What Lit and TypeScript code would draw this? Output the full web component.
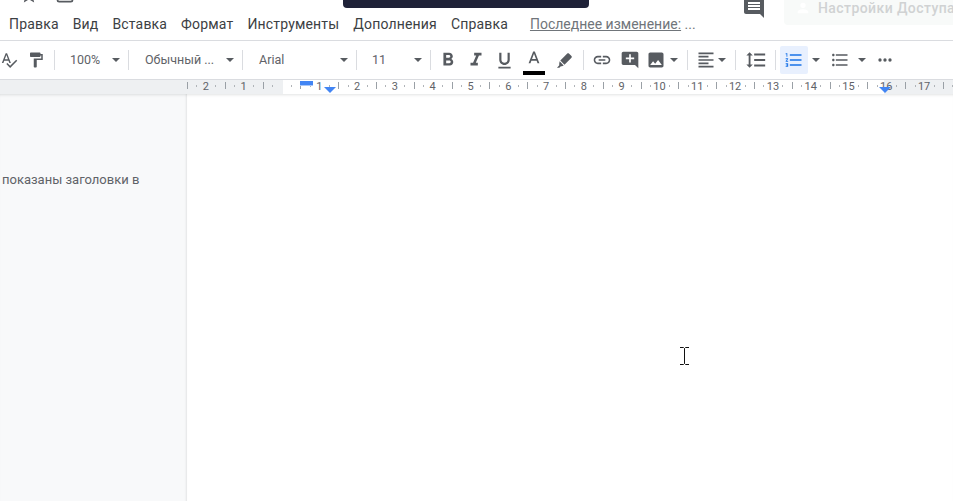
import { LitElement, html, svg, css } from "lit";
import { customElement } from "lit/decorators.js";

const ICONS: Record<string, string> = {
  spell: "M12.45 16h2.09L9.43 3H7.57L2.46 16h2.09l1.12-3h5.64l1.14 3zm-6.02-5L8.5 5.48 10.57 11H6.43zm15.16.59l-8.09 8.09L9.83 16l-1.41 1.41 5.09 5.09L23 13l-1.41-1.41z",
  paint: "M18 4V3c0-.55-.45-1-1-1H5c-.55 0-1 .45-1 1v4c0 .55.45 1 1 1h12c.55 0 1-.45 1-1V6h1v4H9v11c0 .55.45 1 1 1h2c.55 0 1-.45 1-1v-9h8V4h-3z",
  bold: "M15.6 10.79c.97-.67 1.65-1.77 1.65-2.79 0-2.26-1.75-4-4-4H7v14h7.04c2.09 0 3.71-1.7 3.71-3.79 0-1.52-.86-2.82-2.15-3.42zM10 6.5h3c.83 0 1.5.67 1.5 1.5s-.67 1.5-1.5 1.5h-3v-3zm3.5 9H10v-3h3.5c.83 0 1.5.67 1.5 1.5s-.67 1.5-1.5 1.5z",
  italic: "M10 4v3h2.21l-3.42 8H6v3h8v-3h-2.21l3.42-8H18V4z",
  underline: "M12 17c3.31 0 6-2.69 6-6V3h-2.5v8c0 1.93-1.57 3.5-3.5 3.5S8.5 12.93 8.5 11V3H6v8c0 3.31 2.69 6 6 6zm-7 2v2h14v-2H5z",
  color: "M11 3L5.5 17h2.25l1.12-3h6.25l1.12 3h2.25L13 3h-2zm-1.38 9L12 5.67 14.38 12H9.62z",
  marker: "M15.5 3.2c.6-.6 1.5-.6 2.1 0l3.2 3.2c.6.6.6 1.5 0 2.1L12 17.3 6.7 12l8.8-8.8zM5.8 13l5.2 5.2-2.2 1.2-1.4-.1-1.9 1.7H2.5l2.9-3.1-.1-1.5L5.8 13z",
  link: "M3.9 12c0-1.71 1.39-3.1 3.1-3.1h4V7H7c-2.76 0-5 2.24-5 5s2.24 5 5 5h4v-1.9H7c-1.71 0-3.1-1.39-3.1-3.1zM8 13h8v-2H8v2zm9-6h-4v1.9h4c1.71 0 3.1 1.39 3.1 3.1s-1.39 3.1-3.1 3.1h-4V17h4c2.76 0 5-2.24 5-5s-2.24-5-5-5z",
  addComment: "M21.99 4c0-1.1-.89-2-1.99-2H4c-1.1 0-2 .9-2 2v12c0 1.1.9 2 2 2h14l4 4-.01-18zM17 11h-4v4h-2v-4H7V9h4V5h2v4h4v2z",
  image: "M21 19V5c0-1.1-.9-2-2-2H5c-1.1 0-2 .9-2 2v14c0 1.1.9 2 2 2h14c1.1 0 2-.9 2-2zM8.5 13.5l2.5 3.01L14.5 12l4.5 6H5l3.5-4.5z",
  align: "M15 15H3v2h12v-2zm0-8H3v2h12V7zM3 13h18v-2H3v2zm0 8h18v-2H3v2zM3 3v2h18V3H3z",
  spacing: "M6 7h2.5L5 3.5 1.5 7H4v10H1.5L5 20.5 8.5 17H6V7zm4-2v2h12V5H10zm0 14h12v-2H10v2zm0-6h12v-2H10v2z",
  numbered: "M2 17h2v.5H3v1h1v.5H2v1h3v-4H2v1zm1-9h1V4H2v1h1v3zm-1 3h1.8L2 13.1v.9h3v-1H3.2L5 10.9V10H2v1zm5-6v2h14V5H7zm0 14h14v-2H7v2zm0-6h14v-2H7v2z",
  bulleted: "M4 10.5c-.83 0-1.5.67-1.5 1.5s.67 1.5 1.5 1.5 1.5-.67 1.5-1.5-.67-1.5-1.5-1.5zm0-6c-.83 0-1.5.67-1.5 1.5S3.17 7.5 4 7.5 5.5 6.83 5.5 6 4.83 4.5 4 4.5zm0 12c-.83 0-1.5.68-1.5 1.5s.68 1.5 1.5 1.5 1.5-.68 1.5-1.5-.67-1.5-1.5-1.5zM7 19h14v-2H7v2zm0-6h14v-2H7v2zm0-8v2h14V5H7z",
  more: "M6 10a2 2 0 1 0 0 4 2 2 0 0 0 0-4zm6 0a2 2 0 1 0 0 4 2 2 0 0 0 0-4zm6 0a2 2 0 1 0 0 4 2 2 0 0 0 0-4z",
  comment: "M21.99 4c0-1.1-.89-2-1.99-2H4c-1.1 0-2 .9-2 2v12c0 1.1.9 2 2 2h14l4 4-.01-18zM18 14H6v-2h12v2zm0-3H6V9h12v2zm0-3H6V6h12v2z",
  star: "M22 9.24l-7.19-.62L12 2 9.19 8.63 2 9.24l5.46 4.73L5.82 21 12 17.27 18.18 21l-1.63-7.03L22 9.24zM12 15.4l-3.76 2.27 1-4.28-3.32-2.88 4.38-.38L12 6.1l1.71 4.04 4.38.38-3.32 2.88 1 4.28L12 15.4z",
  status: "M5 3h14a3 3 0 0 1 3 3v12a3 3 0 0 1-3 3H5a3 3 0 0 1-3-3V6a3 3 0 0 1 3-3zm0 2a1 1 0 0 0-1 1v12a1 1 0 0 0 1 1h14a1 1 0 0 0 1-1V6a1 1 0 0 0-1-1H5z",
  person: "M12 4a4 4 0 1 1 0 8 4 4 0 0 1 0-8zm0 10c2.7 0 8 1.3 8 4v2H4v-2c0-2.7 5.3-4 8-4z",
};

const MENU = ["Правка", "Вид", "Вставка", "Формат", "Инструменты", "Дополнения", "Справка"];

// zero and cm step of the ruler, in px from the left edge of the window
const ZERO = 281.5;
const CM = 37.8;

function icon(name: string, size = 20) {
  return html`<svg class="ico" width=${size} height=${size} viewBox="0 0 24 24"><path d=${ICONS[name]}></path></svg>`;
}

@customElement("doc-ruler")
export class DocRuler extends LitElement {
  render() {
    const marks = [];
    for (let n = -2; n <= 17; n++) {
      if (n === 0) continue;
      marks.push(html`<span class="num" style="left:${ZERO + n * CM}px">${Math.abs(n)}</span>`);
    }
    const ticks = [];
    for (let q = -10; q <= 72; q++) {
      if (q % 4 === 0) continue;
      const x = ZERO + (q * CM) / 4;
      ticks.push(html`<i class=${q % 2 === 0 ? "tick long" : "tick"} style="left:${x}px"></i>`);
    }
    return html`
      <div class="white"></div>
      ${ticks}${marks}
      <div class="indent"></div>
      <svg class="arrow left" width="12" height="6" viewBox="0 0 12 6">${svg`<path d="M0 0h12L6 6z"></path>`}</svg>
      <svg class="arrow right" width="12" height="6" viewBox="0 0 12 6">${svg`<path d="M0 0h12L6 6z"></path>`}</svg>
    `;
  }

  static styles = css`
    :host {
      display: block;
      position: relative;
      height: 14px;
      background: #eef0f2;
      border-top: 1px solid #dadce0;
      overflow: hidden;
      font-family: Roboto, sans-serif;
    }
    .white {
      position: absolute;
      left: 283px;
      width: 601px;
      top: 0;
      bottom: 0;
      background: #fff;
    }
    .num {
      position: absolute;
      top: 0;
      width: 16px;
      margin-left: -8px;
      text-align: center;
      font-size: 11px;
      line-height: 13px;
      color: #5f6368;
    }
    .tick {
      position: absolute;
      top: 5px;
      width: 1px;
      height: 2px;
      background: #b0b4b8;
    }
    .tick.long {
      top: 2px;
      height: 7px;
      background: #9aa0a6;
    }
    .indent {
      position: absolute;
      left: 300px;
      top: 1px;
      width: 13px;
      height: 5px;
      background: #4285f4;
      border-bottom: 1px solid #a9c6f7;
      box-sizing: border-box;
    }
    .arrow {
      position: absolute;
      top: 7px;
      fill: #4285f4;
    }
    .arrow.left {
      left: 324px;
    }
    .arrow.right {
      left: 879px;
    }
  `;
}

@customElement("app-root")
export class AppRoot extends LitElement {
  private button(name: string, width: number, size = 20, extra = "") {
    return html`<div class="btn ${extra}" style="width:${width}px">${icon(name, size)}</div>`;
  }

  private select(label: string, width: number, extra = "") {
    return html`<div class="select ${extra}" style="width:${width}px"><span>${label}</span><i class="caret"></i></div>`;
  }

  render() {
    return html`
      <header class="head">
        <div class="title">
          <div class="top-icons">
            <span class="star">${icon("star")}</span>
            <span class="status">${icon("status")}</span>
          </div>
          <nav class="menu">
            ${MENU.map((m) => html`<span>${m}</span>`)}
            <span class="changed"><u>Последнее изменение:</u> ...</span>
          </nav>
        </div>
        <div class="actions">
          <span class="comments">${icon("comment", 24)}</span>
          <div class="share">${icon("person", 16)}<span>Настройки Доступа</span></div>
        </div>
      </header>
      <div class="share-bar"></div>

      <div class="toolbar">
        ${this.button("spell", 18, 18)}${this.button("paint", 36, 18)}
        <i class="sep"></i>
        ${this.select("100%", 73)}
        <i class="sep"></i>
        ${this.select("Обычный ...", 113, "wide")}
        <i class="sep"></i>
        ${this.select("Arial", 113, "wide")}
        <i class="sep"></i>
        ${this.select("11", 73)}
        <i class="sep"></i>
        <div class="lead"></div>
        ${this.button("bold", 28, 22)}${this.button("italic", 28, 22)}
        ${this.button("underline", 29, 21)}
        <div class="btn color">${icon("color")}<i class="swatch"></i></div>
        ${this.button("marker", 31, 19)}
        <div class="lead"></div>
        <i class="sep"></i>
        ${this.button("link", 35)}${this.button("addComment", 22)}
        ${this.button("image", 30)}
        <i class="caret image-caret"></i>
        <i class="sep image-sep"></i>
        ${this.button("align", 36)}
        <i class="caret align-caret"></i>
        <i class="sep align-sep"></i>
        ${this.button("spacing", 39, 22)}
        <i class="sep"></i>
        <div class="lead wide"></div>
        ${this.button("numbered", 28, 20, "active")}
        <i class="caret list-caret"></i>
        ${this.button("bulleted", 24)}
        <i class="caret list-caret second"></i>
        ${this.button("more", 24)}
      </div>

      <doc-ruler></doc-ruler>

      <main class="body">
        <aside class="outline"><p>показаны заголовки в</p></aside>
        <section class="page"></section>
      </main>

      <svg class="cursor" width="9" height="18" viewBox="0 0 9 18">
        <path d="M0 .5h3.5l1 1 1-1H9M4.5 1.5v15M0 17.5h3.5l1-1 1 1H9" fill="none" stroke="#111" stroke-width="1"></path>
      </svg>
    `;
  }

  static styles = css`
    :host {
      display: block;
      position: relative;
      width: 953px;
      height: 501px;
      overflow: hidden;
      background: #fff;
      font-family: Roboto, sans-serif;
    }
    .ico {
      display: block;
      fill: #575b60;
      flex: none;
    }
    .head {
      display: flex;
      height: 40px;
      border-bottom: 1px solid #dadce0;
    }
    .title {
      flex: 1;
      min-width: 0;
    }
    .top-icons {
      display: flex;
      height: 14px;
      padding-left: 19px;
      gap: 16px;
      overflow: hidden;
    }
    .star,
    .status {
      margin-top: -15px;
    }
    .menu {
      display: flex;
      align-items: center;
      gap: 14px;
      padding-left: 9px;
      font-size: 14px;
      line-height: 20px;
      letter-spacing: 0.17px;
      color: #3c4043;
      white-space: nowrap;
    }
    .changed {
      margin-left: 8px;
      letter-spacing: 0;
      color: #70757a;
    }
    .actions {
      display: flex;
      width: 221px;
      flex: none;
      align-items: flex-start;
      padding-left: 10px;
      box-sizing: border-box;
    }
    .comments {
      margin-top: -4px;
      width: 42px;
    }
    .share {
      flex: 1;
      height: 25px;
      display: flex;
      align-items: flex-start;
      gap: 7px;
      padding-left: 11px;
      border-radius: 0 0 0 4px;
      background: #f8faf9;
      font-size: 14px;
      line-height: 16px;
      font-weight: 500;
      letter-spacing: 0.42px;
      white-space: nowrap;
      color: #d0d2d3;
      overflow: hidden;
    }
    .share .ico {
      fill: #fff;
    }
    .share-bar {
      position: absolute;
      left: 343px;
      top: 0;
      width: 246px;
      height: 8px;
      background: #1f2238;
      border-radius: 0 0 4px 4px;
    }
    .toolbar {
      display: flex;
      align-items: center;
      height: 38px;
    }
    .btn {
      display: flex;
      align-items: center;
      justify-content: center;
      height: 28px;
      flex: none;
      border-radius: 2px;
      position: relative;
    }
    .btn.active {
      background: #e8f0fe;
    }
    .btn.active .ico {
      fill: #1a73e8;
    }
    .color {
      width: 30px;
      align-items: flex-start;
      padding-top: 3px;
      height: 25px;
    }
    .swatch {
      position: absolute;
      left: 4px;
      bottom: -1px;
      width: 22px;
      height: 4px;
      background: #000;
    }
    .lead {
      width: 3px;
      flex: none;
    }
    .lead.wide {
      width: 4px;
    }
    .sep {
      width: 1px;
      height: 20px;
      flex: none;
      background: #dadce0;
    }
    .image-sep,
    .align-sep {
      margin-left: 9px;
    }
    .select {
      display: flex;
      align-items: center;
      justify-content: space-between;
      flex: none;
      box-sizing: border-box;
      padding: 0 8px 0 15px;
      font-size: 12.5px;
      color: #5f6368;
      white-space: nowrap;
    }
    .select.wide {
      padding-left: 16px;
    }
    .select span {
      padding-bottom: 2px;
    }
    .caret {
      display: block;
      flex: none;
      width: 0;
      height: 0;
      border-left: 4px solid transparent;
      border-right: 4px solid transparent;
      border-top: 4px solid #575b60;
    }
    .image-caret {
      margin-left: -1px;
    }
    .align-caret {
      margin-left: -6px;
    }
    .list-caret {
      margin: 0 8px 0 4px;
    }
    .list-caret.second {
      margin: 0 7px 0 6px;
    }
    .body {
      display: flex;
      height: 407px;
    }
    .outline {
      width: 187px;
      flex: none;
      background: #f8f9fa;
      box-shadow: inset 0 3px 3px -2px rgba(60, 64, 67, 0.15), inset -3px 0 3px -3px rgba(60, 64, 67, 0.2);
      padding: 77px 0 0 2px;
      box-sizing: border-box;
    }
    .outline p {
      margin: 0;
      font-size: 13px;
      line-height: 18px;
      color: #5f6368;
      white-space: nowrap;
    }
    .page {
      flex: 1;
      background: #fff;
      box-shadow: inset 0 3px 3px -2px rgba(60, 64, 67, 0.15);
    }
    .cursor {
      position: absolute;
      left: 680px;
      top: 347px;
    }
  `;
}
